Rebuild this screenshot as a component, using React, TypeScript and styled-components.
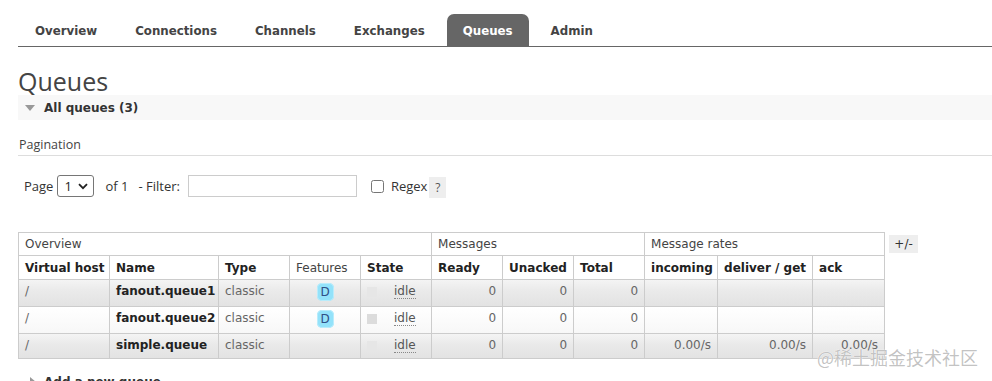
import React from "react";
import styled, { createGlobalStyle } from "styled-components";

const Global = createGlobalStyle`
  html, body { margin: 0; padding: 0; background: #fff; }
  body { font-family: "DejaVu Sans", Verdana, sans-serif; font-size: 12px; color: #444; overflow: hidden; }
  * { box-sizing: border-box; }
`;

const Page = styled.div`
  position: relative;
  width: 992px;
  height: 381px;
  padding-left: 18px;
  overflow: hidden;
`;

const Nav = styled.nav`
  display: flex;
  padding-top: 14px;
  border-bottom: 1px solid #666;
  padding-left: 1px;
`;

const Tab = styled.div<{ $active?: boolean }>`
  height: 32px;
  line-height: 34px;
  padding: 0 16px;
  margin-right: 6px;
  font-weight: bold;
  font-size: 11.8px;
  color: ${(p) => (p.$active ? "#fff" : "#444")};
  background: ${(p) => (p.$active ? "#666" : "transparent")};
  border-radius: 7px 7px 0 0;
`;

const Title = styled.h1`
  margin: 19px 0 0 0;
  height: 29px;
  line-height: 30px;
  font-family: "Open Sans", sans-serif;
  font-weight: normal;
  font-size: 25px;
  color: #444;
`;

const SectionBar = styled.div`
  display: flex;
  align-items: center;
  height: 25px;
  background: #f8f8f8;
  font-weight: bold;
  font-size: 12px;
  color: #333;
  padding-left: 7px;
  gap: 9px;
`;

const DownArrow = styled.span`
  width: 0;
  height: 0;
  border-left: 5px solid transparent;
  border-right: 5px solid transparent;
  border-top: 6px solid #999;
`;

const RightArrow = styled.span`
  width: 0;
  height: 0;
  border-top: 5px solid transparent;
  border-bottom: 5px solid transparent;
  border-left: 6px solid #999;
  margin-left: 5px;
`;

const SubHeading = styled.div`
  margin-top: 15px;
  height: 21px;
  line-height: 20px;
  padding-left: 1px;
  font-family: "Open Sans", sans-serif;
  font-size: 12.5px;
  color: #444;
  border-bottom: 1px solid #ddd;
`;

const FormRow = styled.div`
  display: flex;
  align-items: center;
  margin-top: 19px;
  height: 22px;
  padding-left: 6px;
  font-family: "Open Sans", sans-serif;
  font-size: 13px;
  color: #333;
`;

const Label = styled.span<{ $ml?: number }>`
  margin-left: ${(p) => p.$ml ?? 0}px;
`;

const SelectWrap = styled.div`
  position: relative;
  margin-left: 4px;
  width: 37px;
  height: 22px;
`;

const Select = styled.select`
  appearance: none;
  width: 100%;
  height: 100%;
  border: 1px solid #767676;
  border-radius: 3px;
  background: #fff;
  padding: 0 0 0 6px;
  font-family: "Open Sans", sans-serif;
  font-size: 13px;
  color: #222;
`;

const Chevron = styled.svg`
  position: absolute;
  right: 6px;
  top: 8px;
  pointer-events: none;
`;

const TextInput = styled.input`
  margin-left: 8px;
  width: 169px;
  height: 22px;
  border: 1px solid #ccc;
  padding: 0 4px;
`;

const Check = styled.input`
  margin: 0 0 0 14px;
  width: 13px;
  height: 13px;
`;

const Help = styled.span`
  margin-left: 2px;
  width: 17px;
  height: 21px;
  line-height: 21px;
  text-align: center;
  background: #eee;
  color: #555;
  font-size: 12px;
  margin-top: 3px;
`;

const TableRow = styled.div`
  display: flex;
  align-items: flex-start;
  gap: 4px;
  margin-top: 35px;
`;

const Table = styled.table`
  border-collapse: collapse;
  table-layout: fixed;
  width: 866px;
  border: 1px solid #ccc;
`;

const GroupTh = styled.th`
  height: 23px;
  text-align: left;
  font-weight: normal;
  padding: 0 6px;
  border: 1px solid #ccc;
  color: #444;
  background: #fff;
`;

const Th = styled.th<{ $plain?: boolean }>`
  height: 24px;
  text-align: left;
  font-weight: ${(p) => (p.$plain ? "normal" : "bold")};
  padding: 0 6px;
  border: 1px solid #ccc;
  color: ${(p) => (p.$plain ? "#444" : "#222")};
  background: #fff;
  white-space: nowrap;
`;

const Tr = styled.tr<{ $alt: boolean; $h: number }>`
  height: ${(p) => p.$h}px;
  background: ${(p) =>
    p.$alt
      ? "linear-gradient(to bottom, #f4f4f4 0%, #eaeaea 40%, #e2e2e2 100%)"
      : "linear-gradient(to bottom, #ffffff, #f7f7f7)"};
`;

const Td = styled.td<{ $right?: boolean; $bold?: boolean }>`
  border: 1px solid #ccc;
  padding: 4px 6px 0 6px;
  line-height: 15px;
  vertical-align: top;
  text-align: ${(p) => (p.$right ? "right" : "left")};
  font-weight: ${(p) => (p.$bold ? "bold" : "normal")};
  color: ${(p) => (p.$bold ? "#222" : "#666")};
  white-space: nowrap;
`;

const FeatureTd = styled(Td)`
  padding-top: 3px;
`;

const Badge = styled.span`
  display: block;
  width: 17px;
  height: 18px;
  line-height: 18px;
  margin: 0 auto;
  text-align: center;
  border-radius: 5px;
  background: #93e2fa;
  box-shadow: inset 0 0 0 1px #b9ecfb;
  color: #2f4f86;
  font-size: 12px;
`;

const StateCell = styled.div`
  display: flex;
  align-items: center;
  gap: 17px;
`;

const StateBox = styled.span<{ $faint: boolean }>`
  width: 10px;
  height: 10px;
  background: ${(p) => (p.$faint ? "#e6e6e6" : "#dcdcdc")};
`;

const Idle = styled.span`
  border-bottom: 1px dotted #888;
  line-height: 14px;
  color: #555;
`;

const Toggle = styled.span`
  margin-top: 3px;
  width: 29px;
  height: 18px;
  line-height: 18px;
  text-align: center;
  background: #eee;
  color: #333;
  font-size: 12px;
`;

const BottomBar = styled(SectionBar)`
  margin-top: 10px;
  background: #fff;
  gap: 8px;
`;

const Watermark = styled.div`
  position: absolute;
  left: 817px;
  top: 344px;
  font-family: "Noto Sans CJK SC", sans-serif;
  font-size: 18px;
  color: rgba(120, 120, 120, 0.45);
  text-shadow: 0 0 1px #fff, 0 0 1px #fff;
`;

const cols = [91, 109, 71, 71, 71, 71, 71, 71, 73, 95, 72];

type Row = { name: string; d: boolean; rates: boolean; h: number };
const rows: Row[] = [
  { name: "fanout.queue1", d: true, rates: false, h: 27 },
  { name: "fanout.queue2", d: true, rates: false, h: 27 },
  { name: "simple.queue", d: false, rates: true, h: 25 },
];

export default function App() {
  return (
    <>
      <Global />
      <Page>
        <Nav>
          {["Overview", "Connections", "Channels", "Exchanges", "Queues", "Admin"].map((t) => (
            <Tab key={t} $active={t === "Queues"}>
              {t}
            </Tab>
          ))}
        </Nav>
        <Title>Queues</Title>
        <SectionBar>
          <DownArrow />
          All queues (3)
        </SectionBar>
        <SubHeading>Pagination</SubHeading>
        <FormRow>
          <Label>Page</Label>
          <SelectWrap>
            <Select defaultValue="1">
              <option value="1">1</option>
            </Select>
            <Chevron width="10" height="7" viewBox="0 0 10 7">
              <path d="M1 1.2 L5 5.2 L9 1.2" fill="none" stroke="#222" strokeWidth="1.8" />
            </Chevron>
          </SelectWrap>
          <Label $ml={11}>of 1</Label>
          <Label $ml={10}>- Filter:</Label>
          <TextInput />
          <Check type="checkbox" />
          <Label $ml={7}>Regex</Label>
          <Help>?</Help>
        </FormRow>
        <TableRow>
          <Table>
            <colgroup>
              {cols.map((w, i) => (
                <col key={i} style={{ width: w }} />
              ))}
            </colgroup>
            <thead>
              <tr>
                <GroupTh colSpan={5}>Overview</GroupTh>
                <GroupTh colSpan={3}>Messages</GroupTh>
                <GroupTh colSpan={3}>Message rates</GroupTh>
              </tr>
              <tr>
                <Th>Virtual host</Th>
                <Th>Name</Th>
                <Th>Type</Th>
                <Th $plain>Features</Th>
                <Th>State</Th>
                <Th>Ready</Th>
                <Th>Unacked</Th>
                <Th>Total</Th>
                <Th>incoming</Th>
                <Th>deliver / get</Th>
                <Th>ack</Th>
              </tr>
            </thead>
            <tbody>
              {rows.map((r, i) => (
                <Tr key={r.name} $alt={i !== 1} $h={r.h}>
                  <Td>/</Td>
                  <Td $bold>{r.name}</Td>
                  <Td>classic</Td>
                  <FeatureTd>{r.d && <Badge>D</Badge>}</FeatureTd>
                  <Td>
                    <StateCell>
                      <StateBox $faint={i !== 1} />
                      <Idle>idle</Idle>
                    </StateCell>
                  </Td>
                  <Td $right>0</Td>
                  <Td $right>0</Td>
                  <Td $right>0</Td>
                  <Td $right>{r.rates ? "0.00/s" : ""}</Td>
                  <Td $right>{r.rates ? "0.00/s" : ""}</Td>
                  <Td $right>{r.rates ? "0.00/s" : ""}</Td>
                </Tr>
              ))}
            </tbody>
          </Table>
          <Toggle>+/-</Toggle>
        </TableRow>
        <BottomBar>
          <RightArrow />
          Add a new queue
        </BottomBar>
        <Watermark>@稀土掘金技术社区</Watermark>
      </Page>
    </>
  );
}
